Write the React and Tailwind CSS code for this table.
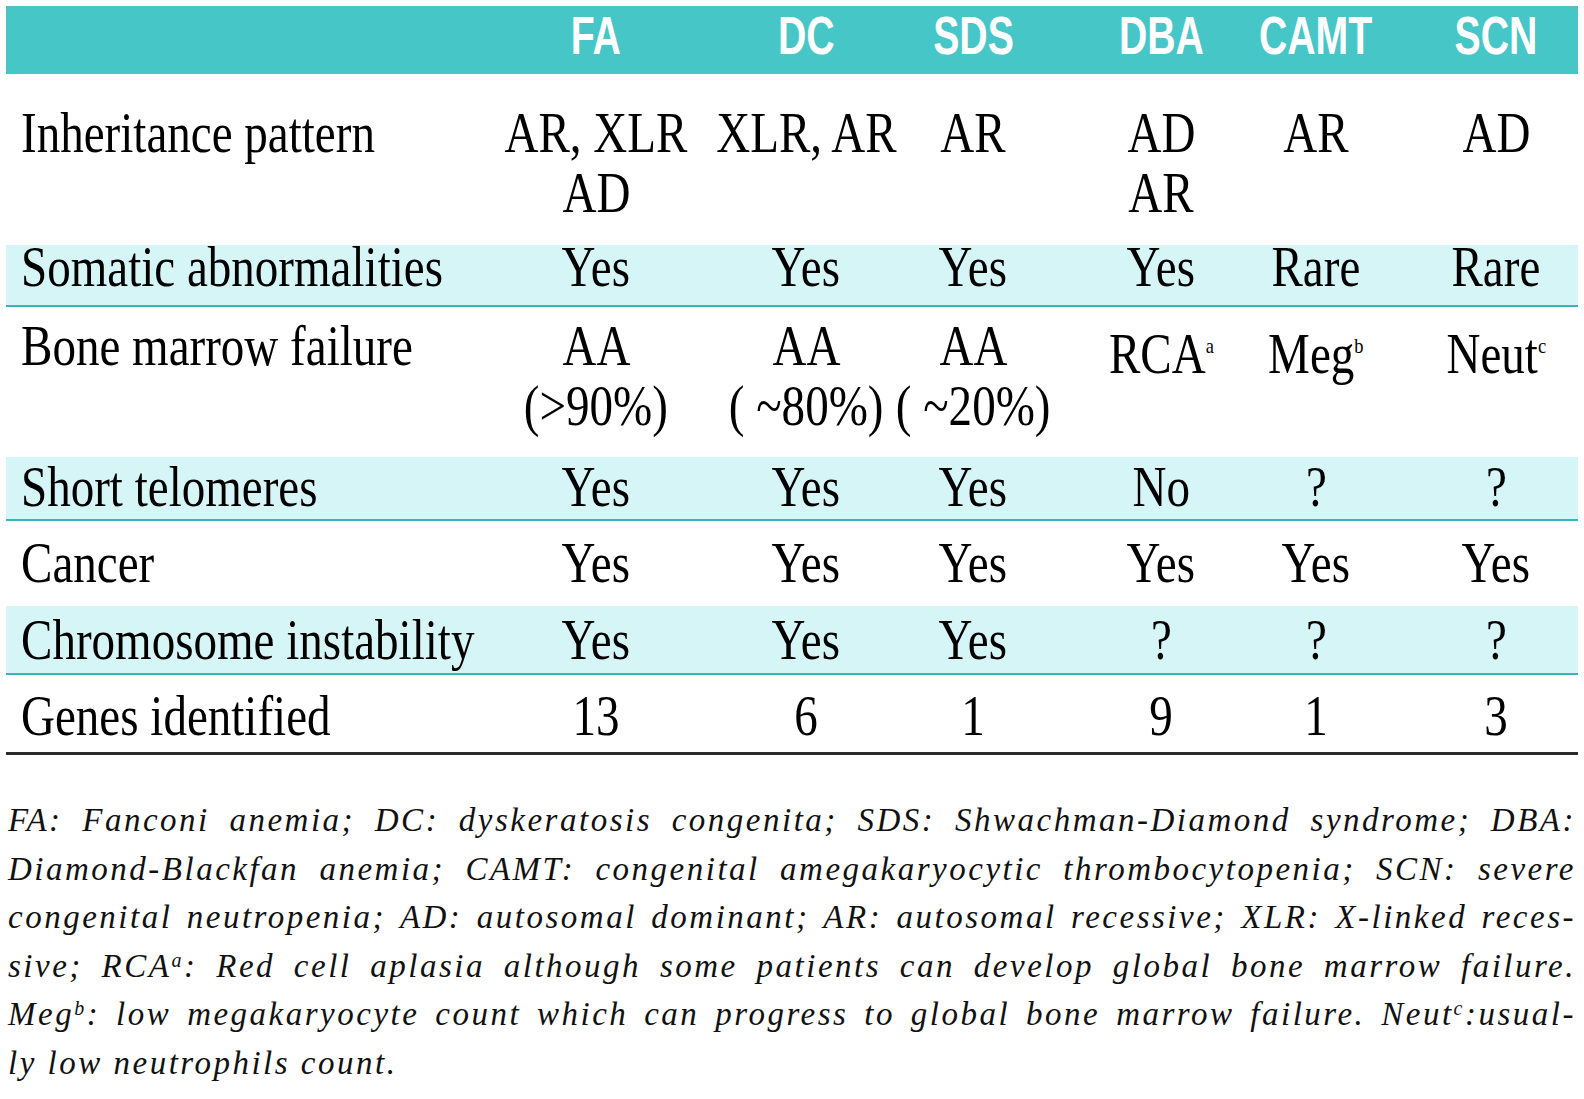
import React from 'react';

// column boundaries picked so each data column is centred on the reference
const COLS = 'grid grid-cols-[416px_348px_72px_262px_114px_196px_164px]';

const rows = [
  {
    label: 'Inheritance pattern',
    cells: [['AR, XLR', 'AD'], ['XLR, AR'], ['AR'], ['AD', 'AR'], ['AR'], ['AD']],
    cls: 'h-[171px] pt-[29px] leading-[60px]',
  },
  {
    label: 'Somatic abnormalities',
    cells: [['Yes'], ['Yes'], ['Yes'], ['Yes'], ['Rare'], ['Rare']],
    cls: 'h-[62px] leading-[44px] bg-[#d6f5f7] border-b-2 border-[#35b6b9]',
  },
  {
    label: 'Bone marrow failure',
    cells: [['AA', '(>90%)'], ['AA', '( ~80%)'], ['AA', '( ~20%)'], [['RCA', 'a']], [['Meg', 'b']], [['Neut', 'c']]],
    cls: 'h-[150px] pt-[9px] leading-[60px]',
  },
  {
    label: 'Short telomeres',
    cells: [['Yes'], ['Yes'], ['Yes'], ['No'], ['?'], ['?']],
    cls: 'h-[64px] pt-[8px] leading-[44px] bg-[#d6f5f7] border-b-2 border-[#35b6b9]',
  },
  {
    label: 'Cancer',
    cells: [['Yes'], ['Yes'], ['Yes'], ['Yes'], ['Yes'], ['Yes']],
    cls: 'h-[85px] pt-[20px] leading-[44px]',
  },
  {
    label: 'Chromosome instability',
    cells: [['Yes'], ['Yes'], ['Yes'], ['?'], ['?'], ['?']],
    cls: 'h-[69px] pt-[12px] leading-[44px] bg-[#d6f5f7] border-b-2 border-[#35b6b9]',
  },
  {
    label: 'Genes identified',
    cells: [['13'], ['6'], ['1'], ['9'], ['1'], ['3']],
    cls: 'h-[80px] pt-[19px] leading-[44px] border-b-[3px] border-[#2a2a2a]',
  },
];

const heads = ['FA', 'DC', 'SDS', 'DBA', 'CAMT', 'SCN'];

function Line({ line }) {
  // a line is either plain text or [text, superscript]
  if (Array.isArray(line)) {
    return (
      <span className="inline-block whitespace-nowrap scale-x-[0.84]">
        {line[0]}
        <span className="text-[22px] align-[20px]">{line[1]}</span>
      </span>
    );
  }
  return <span className="inline-block whitespace-nowrap scale-x-[0.84]">{line}</span>;
}

const App = () => {
  return (
    <div className="w-[1584px] h-[1099px] bg-white overflow-hidden pt-[6px] px-[6px] text-black">
      {/* Header */}
      <div className={`${COLS} h-[68px] bg-[#46c6c7] leading-[60px] text-white font-bold text-[53px] font-['Liberation_Sans',Arial,sans-serif]`}>
        <div></div>
        {heads.map((h) => (
          <div key={h} className="flex justify-center">
            <span className="inline-block whitespace-nowrap scale-x-[0.74]">{h}</span>
          </div>
        ))}
      </div>

      {/* Body rows */}
      <div className="font-['Liberation_Serif','Times_New_Roman',serif] text-[56px]">
        {rows.map((r) => (
          <div key={r.label} className={`${COLS} ${r.cls}`}>
            <div className="pl-[15px]">
              <span className="inline-block whitespace-nowrap origin-left scale-x-[0.84]">{r.label}</span>
            </div>
            {r.cells.map((c, i) => (
              <div key={i} className="flex flex-col items-center">
                {c.map((line, j) => (
                  <Line key={j} line={line} />
                ))}
              </div>
            ))}
          </div>
        ))}
      </div>

      {/* Footnote */}
      <div className="mt-[41px] px-[2px] italic text-[33px] tracking-[2.5px] leading-[48.5px] text-[#111] font-['Liberation_Serif','Times_New_Roman',serif]">
        <div className="whitespace-nowrap text-justify [text-align-last:justify]">
          FA: Fanconi anemia; DC: dyskeratosis congenita; SDS: Shwachman-Diamond syndrome; DBA:
        </div>
        <div className="whitespace-nowrap text-justify [text-align-last:justify]">
          Diamond-Blackfan anemia; CAMT: congenital amegakaryocytic thrombocytopenia; SCN: severe
        </div>
        <div className="whitespace-nowrap text-justify [text-align-last:justify]">
          congenital neutropenia; AD: autosomal dominant; AR: autosomal recessive; XLR: X-linked reces-
        </div>
        <div className="whitespace-nowrap text-justify [text-align-last:justify]">
          sive; RCA<sup className="text-[20px]">a</sup>: Red cell aplasia although some patients can develop global bone marrow failure.
        </div>
        <div className="whitespace-nowrap text-justify [text-align-last:justify]">
          Meg<sup className="text-[20px]">b</sup>: low megakaryocyte count which can progress to global bone marrow failure. Neut<sup className="text-[20px]">c</sup>:usual-
        </div>
        <div className="whitespace-nowrap">ly low neutrophils count.</div>
      </div>
    </div>
  );
};

export default App;
